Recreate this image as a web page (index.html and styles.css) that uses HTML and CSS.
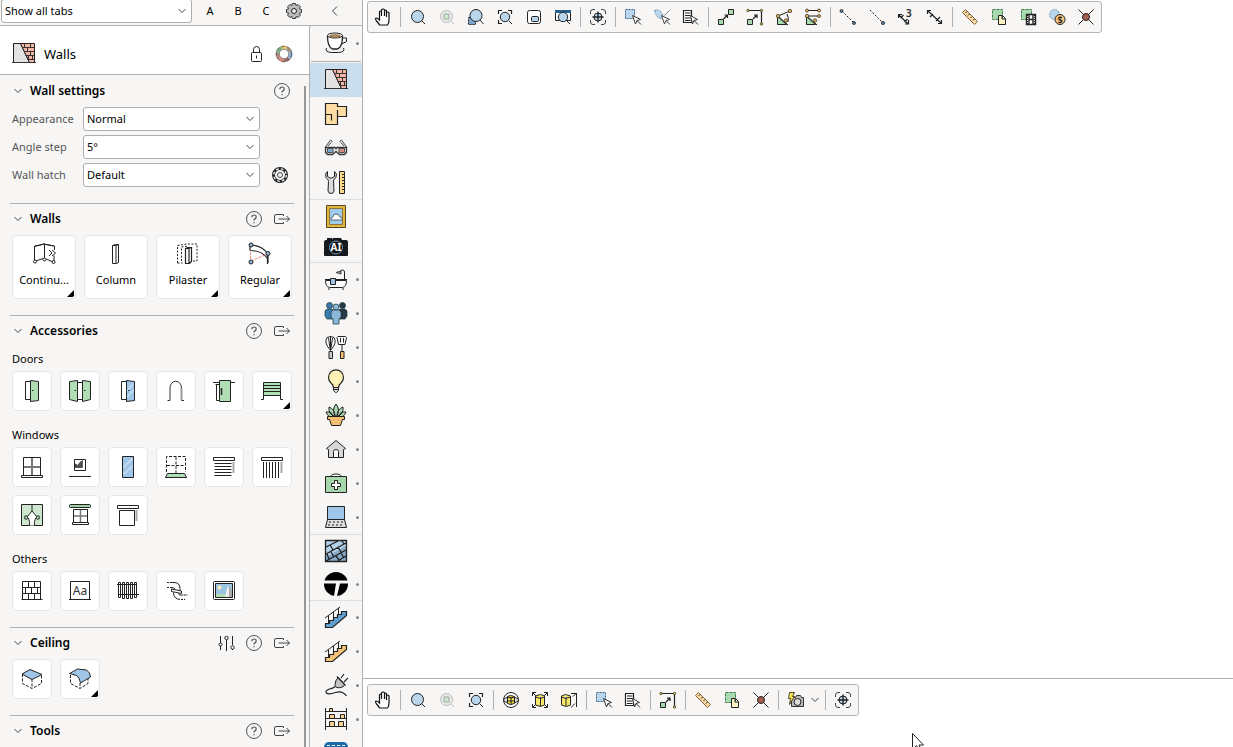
FILE: index.html
```html
<!DOCTYPE html>
<html lang="en">
<head>
<meta charset="utf-8">
<title>Floor planner</title>
<link rel="stylesheet" href="styles.css">
</head>
<body>
<svg class="sprite" aria-hidden="true">
  <symbol id="chev" viewBox="0 0 10 10"><path d="M1.500 3l3.500 3.500L8.500 3" stroke="#444"/></symbol>
  <symbol id="back" viewBox="0 0 10 10"><path d="M7 .5L2.500 5 7 9.500" stroke="#444"/></symbol>
  <symbol id="corner" viewBox="0 0 8 8"><path d="M8 0v6q0 2-2 2H0z" fill="#000" stroke="none"/></symbol>
  <symbol id="gear" viewBox="0 0 24 24"><path d="M10.500 4.500h3l.6 2 1.900-1 2.300 2.300-1 1.900 2.200.8v3l-2.200.8 1 1.900-2.300 2.300-1.900-1-.6 2h-3l-.7-2-1.900 1-2.300-2.300 1-1.900-2.100-.8v-3l2.100-.8-1-1.900 2.300-2.300 1.900 1z" fill="#bbb" stroke="#333"/><circle cx="12" cy="12" r="2.500" fill="#eee"/></symbol>
  <symbol id="gear2" viewBox="0 0 24 24"><circle cx="12" cy="12" r="6.500" stroke-width="3"/><circle cx="12" cy="12" r="6.300" stroke="#fff" stroke-width="1.200" stroke-dasharray="2.800 2.150"/><circle cx="12" cy="12" r="2.500" stroke="#444"/></symbol>
  <symbol id="lock" viewBox="0 0 24 24"><rect x="7.500" y="10.500" width="10" height="9" rx="1"/><path d="M9.500 10V7.500a3 3 0 0 1 6 0V10M12.500 13.500v3"/></symbol>
  <symbol id="wheel" viewBox="0 0 24 24"><g stroke-width="3.500"><path d="M9.500 5.800a6.500 6.500 0 0 1 5 0" stroke="#e9c46a"/><path d="M15 6a6.500 6.500 0 0 1 3.300 4" stroke="#a9997a"/><path d="M18.500 10a6.500 6.500 0 0 1-1.300 6" stroke="#87add0"/><path d="M17 16.200a6.500 6.500 0 0 1-5 2.300" stroke="#9a6c65"/><path d="M12 18.500a6.500 6.500 0 0 1-5-2.500" stroke="#e18b75"/><path d="M7 16a6.500 6.500 0 0 1-1.400-5.500" stroke="#b78684"/><path d="M5.600 10.500a6.500 6.500 0 0 1 4-4.600" stroke="#79b387"/></g><circle cx="12" cy="12" r="7.700" stroke="#555" stroke-width=".8" stroke-dasharray="4 1.500"/><circle cx="12" cy="12" r="4.700" stroke="#777" stroke-width=".8"/></symbol>
  <symbol id="help" viewBox="0 0 24 24"><circle cx="12" cy="12" r="7.500" stroke="#555"/><path d="M9.800 10.200q0-2.200 2.200-2.200t2.200 2q0 1.200-1.300 1.900-.9.500-.9 1.600" stroke="#555" stroke-width="1.200"/><path d="M11.400 15h1.200v1.300h-1.200z" fill="#555" stroke="none"/></symbol>
  <symbol id="out" viewBox="0 0 24 24"><path d="M13.500 9V7.500H6q-1.500 0-1.500 1.500v6q0 1.500 1.500 1.500h7.500V15M8.500 12h11M16.500 9l3 3-3 3" stroke="#444"/></symbol>
  <symbol id="sliders" viewBox="0 0 24 24"><path d="M6.500 5v7M6.500 15v4M12.500 9v11M18.500 5v9M18.500 18v1"/><circle cx="6.500" cy="13.500" r="1.500"/><circle cx="12.500" cy="7" r="1.700"/><circle cx="18.500" cy="16.500" r="1.700"/></symbol>

  <symbol id="wall" viewBox="0 0 24 24"><path d="M1.500 1.500h7l9 19h-16z" fill="#e2e2e2"/><path d="M8.500 1.500h14v19h-5z" fill="#f5b5a4"/><path d="M10 5.500h12.500M12 9.500h10.500M13.500 13.500h9M15.500 17.500h7M12.500 1.500v4M18.500 1.500v4M15.500 5.500v4M18.500 9.500v4M16.500 13.500v4M20.500 13.500v4M0 20.500h24" stroke="#333"/></symbol>
  <symbol id="cont" viewBox="0 0 24 24"><path d="M2.500 18V4q5-.5 9.500-2l10.500 2v4M2.500 4.500l9-2.500 10 2M12.500 2v15M22 13.500V19M4 19l7-2.500M14 17l6 2.500"/><path d="M17 8l3 3-3 3M20 8l3.500 3-3.500 3"/><g fill="#fff"><circle cx="3" cy="19.500" r="1.500"/><circle cx="12.500" cy="17.500" r="1.500"/><circle cx="21.500" cy="20" r="1.500"/></g></symbol>
  <symbol id="col" viewBox="0 0 24 24"><path d="M8.500 3.500l3-1h3v18l-2 1h-4zM8.500 3.500H12l2.500-1M12 3.500v18"/></symbol>
  <symbol id="pil" viewBox="0 0 24 24"><path d="M1.500 21V3.500l9-1.500h10.500v17h-5M1.500 21h5M5.500 19V5l7-1" stroke-dasharray="2 1.500"/><path d="M9.500 6.500l2-1h4v14l-2 2h-4zM9.500 6.500H13l2-1M13 6.500v15" fill="#fff" stroke-width="1.200"/></symbol>
  <symbol id="reg" viewBox="0 0 24 24"><path d="M2 3q12 0 18 9v9M2 8.500q13 0 18 9M2 3v5.500M19.500 12v10" stroke-width="1.200"/><path d="M2.500 10v9M3 19l16-7" stroke="#e08a72" stroke-dasharray="3 1"/><g fill="#8fb8dc"><circle cx="3" cy="3" r="2"/><circle cx="20" cy="11.500" r="2"/><circle cx="3" cy="20" r="2"/></g></symbol>

  <symbol id="d1" viewBox="0 0 24 24"><path d="M5.500 2.500h5v18h-5z"/><path d="M10.500 1.500l8 1v19l-8 1z" fill="#b1ddb5"/><path d="M12 11.500h1.500"/></symbol>
  <symbol id="d2" viewBox="0 0 24 24"><path d="M9.500 3.500h5v17h-5z"/><path d="M1.500 2.500l8-1v21l-8-2zM22.500 2.500l-8-1v21l8-2z" fill="#b1ddb5"/><path d="M6.500 11.500h1.500M16 11.500h1.500"/></symbol>
  <symbol id="d3" viewBox="0 0 24 24"><path d="M5.500 2.500h5v18h-5z"/><path d="M10.500 1.500l8 1v19l-8 1z" fill="#9fc5e8"/><path d="M11 18l7-7M11 12l6-7" stroke="#c6dcf0" stroke-width="1.500"/><path d="M12 11.500h1.500"/></symbol>
  <symbol id="d4" viewBox="0 0 24 24"><path d="M3.500 21.500H6V9a5.500 6.500 0 0 1 11.500 0v12.500H20" stroke="#333"/><path d="M6 9v12M17.500 9v12" stroke="#999" stroke-width="2"/></symbol>
  <symbol id="d5" viewBox="0 0 24 24"><path d="M1 3.500h22M4.500 5.500v16h3M3.500 5.500h4"/><path d="M7.500 1.500h11v21h-11z" fill="#b1ddb5"/><path d="M9.500 9v7" stroke-width="1.500"/></symbol>
  <symbol id="d6" viewBox="0 0 24 24"><path d="M3.500 3.500h17v13h-17z" fill="#b1ddb5"/><path d="M3.500 6.500h17M3.500 9.500h17M3.500 12.500h17M3.500 15v5.500H1M20.500 15v5.500H23"/></symbol>
  <symbol id="w1" viewBox="0 0 24 24"><path d="M3.500 2.500h17v18h-17zM1.500 20.500h21v2h-21z"/><path d="M12 3v17M4 12h16" stroke="#777" stroke-width="2"/></symbol>
  <symbol id="w2" viewBox="0 0 24 24"><path d="M6.500 4.500h11v11h-11zM1 21.500h22"/><path d="M6.500 12.500h8v-8" stroke="#666"/><path d="M7.500 12V9l2 1.500L13.500 6v6z" fill="#555" stroke="#444"/></symbol>
  <symbol id="w3" viewBox="0 0 24 24"><path d="M7 12l9-9" /><path d="M6.500 1.500h11v21h-11z" fill="#9fc5e8"/><path d="M7.500 12.500l9-9M7.500 19l9-8" stroke="#c3daef" stroke-width="2"/></symbol>
  <symbol id="w4" viewBox="0 0 24 24"><path d="M2.500 17V1.500h19V17M12 2v16M3 10.500h18" stroke-dasharray="3 1.500"/><path d="M3.500 18.500h17l2 4h-21z" fill="#b1ddb5"/></symbol>
  <symbol id="w5" viewBox="0 0 24 24"><path d="M1.500 2.500h21v3h-21zM2.500 8.500h17M2.500 11.500h17M2.500 14.500h17M2.500 17.500h17M2.500 20.500h17"/><path d="M21.500 7v11" stroke="#aaa" stroke-width="2"/></symbol>
  <symbol id="w6" viewBox="0 0 24 24"><path d="M1.500 2.500h21v3h-21zM3.500 7v16M6.500 7v16M9.500 7v16M12.500 7v16M15.500 7v16M18.500 7v16"/><path d="M21.500 7v11" stroke="#aaa" stroke-width="2"/></symbol>
  <symbol id="w7" viewBox="0 0 24 24"><path d="M1.500 1.500h21v21h-21z" fill="#cde8cf"/><path d="M12 8l-4.500 6q2.500 1 2 8.500h5q-.5-7.500 2-8.500z" fill="#fff" stroke="none"/><path d="M12 2v6l-5 6q3 2 2.500 8.500M12 8l5 6q-3 2-2.500 8.500"/><g fill="#b1ddb5"><circle cx="6" cy="14.500" r="1.700"/><circle cx="18" cy="14.500" r="1.700"/></g></symbol>
  <symbol id="w8" viewBox="0 0 24 24"><rect x="1.500" y="1.500" width="21" height="3" rx="1" fill="#9fcfa5"/><path d="M5.500 6.500h14v13h-14zM4.500 19.500h16v2h-16z"/><path d="M12.500 7v12M6 13h13" stroke="#777" stroke-width="1.500"/></symbol>
  <symbol id="w9" viewBox="0 0 24 24"><path d="M1.500 2.500h21v3h-21zM3.500 7.500h15v15h-15z"/><path d="M20.500 7v11" stroke="#aaa" stroke-width="2"/></symbol>
  <symbol id="o1" viewBox="0 0 24 24"><path d="M2.500 2.500h18v18h-18zM1.500 20.500h21M2.500 8.500h18M2.500 14.500h18M8.500 2.500v6M14.500 2.500v6M5.500 8.500v6M11.500 8.500v6M17.500 8.500v6M8.500 14.500v6M14.500 14.500v6"/></symbol>
  <symbol id="o3" viewBox="0 0 24 24"><path d="M1 5.500h20M2 15.500h21M2.500 3.500h2v15h-2zM6.500 3.500h2v16h-2zM10.500 3.500h2v16h-2zM14.500 3.500h2v16h-2zM18.500 3.500h2v15h-2z"/></symbol>
  <symbol id="o4" viewBox="0 0 24 24"><path d="M2 3.500h8q6 0 6 6v1.500M2 8.500h5q3.500 0 4 1.500M7.500 10l10 2v2.500l-10-2zM9.500 13.500q0 7 7.500 7h4M14.500 14.500q0 2 5 1.500h4"/><path d="M2 3.500h6M16 20.500h7M2 8.500h4M19 16h4" stroke="#fff" stroke-dasharray="1 2"/></symbol>
  <symbol id="o5" viewBox="0 0 24 24"><rect x="1.500" y="2.500" width="21" height="18" rx="1"/><path d="M3.500 4.500h17v14h-17z" fill="#9bc4e2"/><path d="M4 15h13l3 3H4z" fill="#b1ddb5" stroke="none"/><path d="M16 6l3 12h-6z" fill="#eee" stroke="none"/><path d="M17 7l3 5v6h-3z" fill="#aaa" stroke="none"/><circle cx="7.500" cy="8.500" r="2" fill="#fdf0b0" stroke="none"/></symbol>
  <symbol id="c1" viewBox="0 0 24 24"><path d="M2.500 7v9.500l9.500 5 9.500-5V7M12 12v9" stroke-dasharray="3 1.500"/><path d="M2 7l8-4.500 12 5-10 5z" fill="#9fc5e8"/></symbol>
  <symbol id="c2" viewBox="0 0 24 24"><path d="M2.500 8v8.500l9.500 5 8-5V11M12 16v5" stroke-dasharray="3 1.500"/><path d="M1.500 6.500l8-4.500 9 1 3 3 1 4-10 6q-1-6-4-7.500z" fill="#9fc5e8"/></symbol>

  <symbol id="cup" viewBox="0 0 24 24"><path d="M2.500 17q-2 4 5 4.500h7q7-.5 5-4.500" fill="#eee"/><path d="M3.500 5q0 11 5 13h5q5-2 5-13z" fill="#fff" stroke-width="1.300"/><ellipse cx="11" cy="4.500" rx="7.500" ry="2.500" fill="#fff"/><ellipse cx="11" cy="5" rx="5.500" ry="1.200" fill="#c39768" stroke="#8a6a45"/><path d="M18.500 7h4v3.500l-5 2.500"/></symbol>
  <symbol id="plan" viewBox="0 0 24 24"><path d="M1.500 1.500h12v3h9v10h-9v8h-12zM13.500 8v7M1.500 12.500h6v6" fill="#fddca4" stroke="#222" stroke-width="1.200"/></symbol>
  <symbol id="glasses" viewBox="0 0 24 24"><path d="M1.500 11l5-7 2 1.500M22.500 11l-5-7-2 1.500M4 10l3.500-4M20 10l-3.500-4" stroke="#444"/><path d="M1.500 11.500h9.500l1 1 1-1h9.500v5l-2 2h-5l-3.500-3-3.500 3h-5l-2-2z" fill="#ddd" stroke="#333" stroke-width="1.300"/><path d="M3.500 12.500h5.500v4H3.500z" fill="#79abd5" stroke="#555"/><path d="M15 12.500h5.500v4H15z" fill="#d88d84" stroke="#555"/></symbol>
  <symbol id="tools" viewBox="0 0 24 24"><path d="M3.500 1.500q-3 2-1.500 6 2.500 2 2.500 4l-.5 9.500q.5 2.500 3 2.500t3-2.500L9.500 11q0-2 2.500-3.500 1.500-4-1.500-6v5L8 8H6L3.500 6.500z" fill="#ddd"/><path d="M15.500 1.500h5v22h-5z" fill="#fbd98c"/><path d="M18 4.500h2.500M18 7.500h2.500M18 10.500h2.500M18 13.500h2.500M18 16.500h2.500M18 19.500h2.500"/></symbol>
  <symbol id="frame" viewBox="0 0 24 24"><path d="M2.500 1.500h19v22h-19z" fill="#e2b53d" stroke="#544624"/><path d="M5.500 4.500h13v16h-13z" fill="#9fcbed" stroke="#91743b"/><path d="M7 16q-1-3 2-3 0-3 3-3t4 3q3 0 2 3z" fill="#fff" stroke="#567"/></symbol>
  <symbol id="bath" viewBox="0 0 24 24"><path d="M1.500 13.500h21q0 6-4 7h-13q-4-1-4-7z" fill="#fff"/><path d="M1 12.500h22M20.500 13V5q0-2-2-2t-3 2.500M5 21v2M19 21v2"/><path d="M12 5.500l5-1.500v3z" fill="#999" stroke="#444"/><path d="M6.500 11.500h5v6h-5z" fill="#9fc5e8"/></symbol>
  <symbol id="people" viewBox="0 0 24 24"><g stroke="#244" stroke-width=".8"><g fill="#3a7ab0"><circle cx="5.500" cy="4.500" r="3"/><path d="M1 10l2-2h5l2 2v8H3l-2-3z"/></g><g fill="#263746"><circle cx="18.500" cy="4.500" r="3"/><path d="M23 10l-2-2h-5l-2 2v8h7l2-3z"/></g><g fill="#8eb6da"><circle cx="12" cy="6" r="3"/><path d="M7 11l2-2h6l2 2v5l-2 2v5H9v-5l-2-2z"/></g></g></symbol>
  <symbol id="kitchen" viewBox="0 0 24 24"><path d="M6.500 15.500q-7-8-3.500-13 3.500-2 7 0 3.500 5-3.500 13zM6.500 1v14M4.500 3l1.500 10M8.500 3L7 13" fill="#fff"/><path d="M5 16.500h3.500v7H5z" fill="#ccc"/><path d="M14 1.500h7.500l1 1-1.500 7h-6.500l-1.500-7zM16.500 3v4.500M19.500 3v4.500M18 10v6" fill="#fff"/><path d="M16.500 16.500h3.500v7h-3.500z" fill="#f6be72"/></symbol>
  <symbol id="bulb" viewBox="0 0 24 24"><path d="M9.500 18.500q0-2.500-2.500-4.500a7.500 7.500 0 1 1 10 0q-2.500 2-2.500 4.500z" fill="#fff0b5" stroke-width="1.200"/><path d="M9.500 18.500h5v3l-2 2h-1l-2-2zM9.500 20.500h5" fill="#ddd"/></symbol>
  <symbol id="plant" viewBox="0 0 24 24"><path d="M12 14q-5-7 0-13 5 6 0 13zM11 14q-7-3-6-10 6 2 6 10zM13 14q7-3 6-10-6 2-6 10zM10 14q-6 1-8-5 6-1 8 5zM14 14q6 1 8-5-6-1-8 5z" fill="#a9d5ae"/><path d="M3.500 13.500h17v3h-2l-2 6h-9l-2-6h-2z" fill="#f5be71"/></symbol>
  <symbol id="home" viewBox="0 0 24 24"><path d="M2.500 11.500L12 3.500l9.500 8-2 1v8h-15v-8z" fill="#d8d8d8"/><path d="M9.500 20.500v-6q0-2 2.500-2t2.500 2v6z" fill="#fff"/></symbol>
  <symbol id="aid" viewBox="0 0 24 24"><path d="M7 5.500Q7 3 12 3t5 2.500"/><path d="M1.500 5.500h21v16h-21z" fill="#a6d7ad"/><path d="M10.500 9.500h3v3h3v3h-3v3h-3v-3h-3v-3h3z" fill="#fff"/></symbol>
  <symbol id="laptop" viewBox="0 0 24 24"><path d="M3.500 1.500h17v13h-17z" fill="#9fc5e8"/><path d="M3.500 14.500h17l2 8h-21z" fill="#ddd"/><path d="M5 17h14M4 20h16" stroke-dasharray="2 2"/></symbol>
  <symbol id="tiles" viewBox="0 0 24 24"><path d="M1.500 1.500h21v21h-21z" fill="#b4d0e8"/><path d="M2 22v-4l20-11v15z" fill="#86a9c7" stroke="none"/><path d="M1.500 1.500h21v21h-21zM2 8l12-6M2 15l20-11M2 22l20-11M12 23l10-6M6 6l3 5M14 8l3 5M7 13l3 5M17 14l3 5M3 15l2 5M12 17l3 4M18 2l2 3" stroke-width="1.300"/></symbol>
  <symbol id="tee" viewBox="0 0 24 24"><circle cx="12" cy="12" r="12" fill="#000" stroke="none"/><path d="M0 8.500h24v3h-8L13 24h-3l2-12.500H0z" fill="#f7f6f5" stroke="none"/></symbol>
  <symbol id="stairsB" viewBox="0 0 24 24"><path d="M1.500 18.500h4v-3h4v-3h4v-3h4v-3h5v4L8.500 22.500h-7z" fill="#5f9fd0" stroke-width="1.200"/><path d="M1 13L16 2M4.500 11v7M9.500 7v6M14.500 3v7"/></symbol>
  <symbol id="stairsO" viewBox="0 0 24 24"><path d="M1.500 18.500h4v-3h4v-3h4v-3h4v-3h5v4L8.500 22.500h-7z" fill="#f6c478" stroke-width="1.200"/><path d="M1 13L16 2M4.500 11v7M9.500 7v6M14.500 3v7"/></symbol>
  <symbol id="plug" viewBox="0 0 24 24"><path d="M14 4.500l6.500 7-1 2q-4 2-7 1l-1.500-2q0-5 3-8z" fill="#c4c4c4"/><path d="M13 3.500l8.500 9M17 5l3-4M20 9l4-4M11.500 13.500q-3 2-6 2.500-5 2-3 4t9-.5 11 3.500" stroke-width="1.200"/></symbol>
  <symbol id="shelf" viewBox="0 0 24 24"><path d="M1.500 1v22M22.500 1v22M1.500 4.500h21M1.500 11.500h21M1.500 19.500h21"/><path d="M5.500 1.500h3v3h-3zM5.500 7.500h5v4h-5zM16.500 7.500h4v4h-4zM5.500 14.500h5v5h-5zM14.500 14.500h5v5h-5z" fill="#f7cf91"/></symbol>
  <symbol id="blue" viewBox="0 0 24 24"><rect y="1" width="24" height="22" rx="5" fill="#1c6cab" stroke="none"/><path d="M3 4.500h18" stroke="#fff" stroke-dasharray="3 2"/></symbol>

  <symbol id="hand" viewBox="0 0 24 24"><path d="M8.500 20q-1-2-3-4-2-3 0-3 1 0 3 2V7q0-1 1-1t1 1v4V5q.5-1 1.500-1t1.500 1v6V6q0-1 1-1t1 1v6-4q0-1 1-1t1.500 1v7q0 3-1.500 5z" fill="#fff" stroke="#111" stroke-width="1.200"/></symbol>
  <symbol id="mag" viewBox="0 0 24 24"><circle cx="11.500" cy="11.500" r="6" fill="#b9d6ec"/><path d="M15.500 15.500L19 19"/></symbol>
  <symbol id="magG" viewBox="0 0 24 24"><g stroke="#bbb"><circle cx="11.500" cy="11.500" r="6" fill="#e8eaea"/><path d="M15.500 15.500L19 19"/></g><path d="M9 9h5v5H9z" fill="#cfe6cf" stroke="#9cab9e"/></symbol>
  <symbol id="magS" viewBox="0 0 24 24"><path d="M4.500 12.500h7v7h-7z" fill="#7ba5cc" stroke-dasharray="2 1"/><circle cx="12" cy="10.500" r="6" fill="#b9d6ec"/><path d="M16 15l3.500 4"/></symbol>
  <symbol id="magF" viewBox="0 0 24 24"><path d="M5.500 9V5.500H9M15 5.500h3.500V9M5.500 15v3.500H9" stroke-width="1.200"/><circle cx="12" cy="12" r="4.700" fill="#b9d6ec"/><path d="M15.500 15.500L19 19"/></symbol>
  <symbol id="win" viewBox="0 0 24 24"><rect x="5.500" y="5.500" width="13" height="13" rx="2" fill="#fff"/><rect x="9.500" y="11.500" width="7" height="5" rx="1" fill="#b9d6ec"/></symbol>
  <symbol id="magW" viewBox="0 0 24 24"><path d="M4.500 6.500h15v9h-15z" fill="#fff"/><path d="M4 6.500h16" stroke="#27618f" stroke-width="3"/><circle cx="12" cy="12" r="4.700" fill="#b9d6ec"/><path d="M15.500 15.500L19 19"/></symbol>
  <symbol id="target" viewBox="0 0 24 24"><path d="M4.500 9V7q0-2.500 2.500-2.500h2M15 4.500h2q2.500 0 2.500 2.500v2M4.500 15v2q0 2.500 2.500 2.500h2M19.500 15v2q0 2.500-2.500 2.500h-2" stroke="#444"/><circle cx="12" cy="12" r="4" fill="#b9d6ec"/><path d="M12 6.500v11M6.500 12h11" stroke-width="1.400"/></symbol>
  <symbol id="sel" viewBox="0 0 24 24"><path d="M4.500 4.500h9v9h-9z" fill="#b9d6ec" stroke="#32628c" stroke-dasharray="2 1"/><path d="M11.500 10.500l8 4-3.500 1-1.500 3.500zM16 15.500l4 4" fill="#fff" stroke="#333"/></symbol>
  <symbol id="sel2" viewBox="0 0 24 24"><path d="M4.500 5.500q4-2 7 2t0 6q-5 0-7-8z" fill="#b9d6ec" stroke="#6491b5" stroke-dasharray="2 1"/><path d="M13 12l7-7" stroke="#555" stroke-dasharray="2 1"/><path d="M11.500 10.500l8 4-3.500 1-1.500 3.500zM16 15.500l4 4" fill="#fff" stroke="#444"/></symbol>
  <symbol id="list" viewBox="0 0 24 24"><path d="M4.500 5.500h8v12h-8zM6 8h5.500M6 10.500h5.500M6 13h5.500M6 15.500h5.500" fill="#fff" stroke-width="1.200"/><path d="M11.500 10.500l7 4-3.500 1-1.500 3.500zM15 15.500l4 4" fill="#fff" stroke="#333"/></symbol>
  <symbol id="mv1" viewBox="0 0 24 24"><path d="M14.500 4.500h5v5h-5zM4.500 14.500h5v5h-5z" fill="#a9d9ae"/><path d="M9.500 14l4-4M10.500 10h3v3" stroke-width="1.200"/></symbol>
  <symbol id="mv2" viewBox="0 0 24 24"><path d="M5 5.500h13.500V19" stroke-width="1.200"/><path d="M4.500 14.500h5v5h-5z" fill="#a9d9ae"/><path d="M10 14l4-4M11 10h3v3" stroke-width="1.200"/><g fill="#e3ce59" stroke-width=".7"><circle cx="5" cy="5.500" r="1.200"/><circle cx="18.500" cy="5.500" r="1.200"/><circle cx="18.500" cy="19" r="1.200"/></g></symbol>
  <symbol id="ang1" viewBox="0 0 24 24"><path d="M5.500 19.500v-8l9 8z" fill="#a9d9ae"/><path d="M6 11l12-5M6 11l10 9M15 9q2 4 1 8"/><g fill="#e4b952" stroke-width=".7"><circle cx="6" cy="11" r="1.700"/><circle cx="18" cy="6" r="1.700"/><circle cx="14" cy="15.500" r="1.700"/></g></symbol>
  <symbol id="ang2" viewBox="0 0 24 24"><path d="M5.500 19.500v-8l9 8z" fill="#a9d9ae"/><path d="M6 5.500h12M6 11h12M6 11l10 9"/><g fill="#e4b952" stroke-width=".7"><circle cx="6" cy="5.500" r="1.500"/><circle cx="18" cy="5.500" r="1.500"/><circle cx="6" cy="11" r="1.700"/><circle cx="18" cy="11" r="1.500"/><circle cx="14" cy="15.500" r="1.700"/></g></symbol>
  <symbol id="ln1" viewBox="0 0 24 24"><path d="M6 6l12 12" stroke-dasharray="2 1.500"/><g fill="#5b86ad" stroke-width=".8"><circle cx="5.500" cy="6" r="1.500"/><circle cx="18" cy="18" r="1.500"/></g></symbol>
  <symbol id="ln2" viewBox="0 0 24 24"><path d="M5 5l13 13" stroke-dasharray="2 1.500"/><circle cx="18" cy="18" r="1.600" fill="#5b86ad" stroke-width=".8"/></symbol>
  <symbol id="dim" viewBox="0 0 24 24"><path d="M5 6l13 12M4.500 9V5.500H8M18.500 15v3.500H15M10 9l-3 3M17 12l-4 4" stroke-width="1.200"/></symbol>
  <symbol id="ruler" viewBox="0 0 24 24"><path d="M7.500 4.500l12 12-3 3-12-12z" fill="#fbd8a0" stroke="#85633a"/><path d="M9 6.500L7.500 8M11.500 9L10 10.500M14 11.500L12.500 13M16.500 14L15 15.500"/></symbol>
  <symbol id="copy" viewBox="0 0 24 24"><path d="M5.500 4.500h10v10h-10z" fill="#a9d9ae" stroke="#3d7a4a" stroke-dasharray="3 1"/><path d="M11.500 10.500h4l3 3v6h-7zM15 10.500v3.500h3.500" fill="#fff3c6"/></symbol>
  <symbol id="film" viewBox="0 0 24 24"><path d="M5.500 4.500h10v10h-10z" fill="#a9d9ae" stroke="#3d7a4a" stroke-dasharray="3 1"/><path d="M10.500 9.500h9v10h-9zM13 9.500v10M17 9.500v10M13 14.500h4" fill="#fff" stroke-width="1.400"/><path d="M11.500 10v9M18.500 10v9" stroke-dasharray="1 1"/></symbol>
  <symbol id="cross" viewBox="0 0 24 24"><path d="M4.500 4.500l15 15M19.500 4.500l-15 15"/><circle cx="12" cy="12" r="3.500" fill="#a7604f"/></symbol>
  <symbol id="orbit" viewBox="0 0 24 24"><circle cx="12" cy="12" r="7.500" fill="#fff"/><ellipse cx="12" cy="12" rx="7.500" ry="3" fill="#ddd"/><path d="M8.500 8.500l3-1 4 1v7l-4 1-3-1zM8.500 9l3.500 1 3.500-1M12 9.500V17M8 13h8" fill="#f4df4d"/></symbol>
  <symbol id="box" viewBox="0 0 24 24"><path d="M4.500 8V4.500H8M16 4.500h3.500V8M4.500 16v3.500H8M16 19.500h3.500V16M5 5l3 3M19 5l-3 3M5 19l3-3M19 19l-3-3"/><path d="M7.500 8l5-1.500 4 1.500v9l-4 1.500-5-1.500zM7.500 9l5 1.500L16.500 9M12.500 9v9" fill="#f9e96a"/></symbol>
  <symbol id="box2" viewBox="0 0 24 24"><path d="M4.500 8l4-1.500 5 1.500v9l-4 1.500-5-1.500zM4.500 9l4 1.500L13.500 9M9 9v9" fill="#f9e96a"/><path d="M19.500 5v14M14 5.500h5l-3 3M14 19.500l4-4"/></symbol>
  <symbol id="snap" viewBox="0 0 24 24"><path d="M7.500 9.500h4l1-2h4l1 2h2v9h-12z" fill="#bbb" stroke="#333"/><circle cx="13.500" cy="14" r="3.500" fill="#ddd"/><path d="M5.500 4.500h5l-2 4h2l-5 8 1-6h-2z" fill="#f4df4d" stroke-width=".8"/></symbol>
</svg>

<div class="app">
  <div class="side">
    <header class="topbar">
      <label class="drop tabs-drop"><select aria-label="Tabs"><option>Show all tabs</option></select><svg><use href="#chev"/></svg></label>
      <button class="letter">A</button><button class="letter">B</button><button class="letter">C</button>
      <button class="ico" aria-label="Options"><svg><use href="#gear"/></svg></button>
      <button class="collapse" aria-label="Collapse"><svg><use href="#back"/></svg></button>
    </header>
    <div class="side-body">
      <aside class="panel">
        <div class="title">
          <svg><use href="#wall"/></svg><h1>Walls</h1>
          <button class="ico" aria-label="Lock"><svg><use href="#lock"/></svg></button>
          <button class="ico" aria-label="Colours"><svg><use href="#wheel"/></svg></button>
        </div>
        <div class="scroll">
          <div class="thumb"></div>
          <section>
            <div class="head"><svg class="c"><use href="#chev"/></svg><h2>Wall settings</h2><button class="ico" aria-label="Help"><svg><use href="#help"/></svg></button></div>
            <div class="form">
              <label for="f1">Appearance</label><span class="drop"><select id="f1"><option>Normal</option></select><svg><use href="#chev"/></svg></span><span></span>
              <label for="f2">Angle step</label><span class="drop"><select id="f2"><option>5°</option></select><svg><use href="#chev"/></svg></span><span></span>
              <label for="f3">Wall hatch</label><span class="drop"><select id="f3"><option>Default</option></select><svg><use href="#chev"/></svg></span><button class="ico" aria-label="Hatch settings"><svg><use href="#gear2"/></svg></button>
            </div>
          </section>
          <section>
            <div class="head"><svg class="c"><use href="#chev"/></svg><h2>Walls</h2><button class="ico" aria-label="Help"><svg><use href="#help"/></svg></button><button class="ico" aria-label="Detach"><svg><use href="#out"/></svg></button></div>
            <div class="grid">
              <button class="card"><svg><use href="#cont"/></svg>Continu...<svg class="more"><use href="#corner"/></svg></button>
              <button class="card"><svg><use href="#col"/></svg>Column</button>
              <button class="card"><svg><use href="#pil"/></svg>Pilaster<svg class="more"><use href="#corner"/></svg></button>
              <button class="card"><svg><use href="#reg"/></svg>Regular<svg class="more"><use href="#corner"/></svg></button>
            </div>
          </section>
          <section>
            <div class="head"><svg class="c"><use href="#chev"/></svg><h2>Accessories</h2><button class="ico" aria-label="Help"><svg><use href="#help"/></svg></button><button class="ico" aria-label="Detach"><svg><use href="#out"/></svg></button></div>
            <h3>Doors</h3>
            <div class="grid">
              <button class="tile"><svg><use href="#d1"/></svg></button>
              <button class="tile"><svg><use href="#d2"/></svg></button>
              <button class="tile"><svg><use href="#d3"/></svg></button>
              <button class="tile"><svg><use href="#d4"/></svg></button>
              <button class="tile"><svg><use href="#d5"/></svg></button>
              <button class="tile"><svg><use href="#d6"/></svg><svg class="more"><use href="#corner"/></svg></button>
            </div>
            <h3>Windows</h3>
            <div class="grid">
              <button class="tile"><svg><use href="#w1"/></svg></button>
              <button class="tile"><svg><use href="#w2"/></svg></button>
              <button class="tile"><svg><use href="#w3"/></svg></button>
              <button class="tile"><svg><use href="#w4"/></svg></button>
              <button class="tile"><svg><use href="#w5"/></svg></button>
              <button class="tile"><svg><use href="#w6"/></svg></button>
              <button class="tile"><svg><use href="#w7"/></svg></button>
              <button class="tile"><svg><use href="#w8"/></svg></button>
              <button class="tile"><svg><use href="#w9"/></svg></button>
            </div>
            <h3>Others</h3>
            <div class="grid">
              <button class="tile"><svg><use href="#o1"/></svg></button>
              <button class="tile"><svg viewBox="0 0 24 24"><path d="M2.500 2.500h19v18h-19zM1 20.500h22"/><text x="12" y="16" text-anchor="middle" font-size="12" fill="#333" stroke="none">Aa</text></svg></button>
              <button class="tile"><svg><use href="#o3"/></svg></button>
              <button class="tile"><svg><use href="#o4"/></svg></button>
              <button class="tile"><svg><use href="#o5"/></svg></button>
            </div>
          </section>
          <section>
            <div class="head"><svg class="c"><use href="#chev"/></svg><h2>Ceiling</h2><button class="ico" aria-label="Adjust"><svg><use href="#sliders"/></svg></button><button class="ico" aria-label="Help"><svg><use href="#help"/></svg></button><button class="ico" aria-label="Detach"><svg><use href="#out"/></svg></button></div>
            <div class="grid">
              <button class="tile"><svg><use href="#c1"/></svg></button>
              <button class="tile"><svg><use href="#c2"/></svg><svg class="more"><use href="#corner"/></svg></button>
            </div>
          </section>
          <section>
            <div class="head"><svg class="c"><use href="#chev"/></svg><h2>Tools</h2><button class="ico" aria-label="Help"><svg><use href="#help"/></svg></button><button class="ico" aria-label="Detach"><svg><use href="#out"/></svg></button></div>
          </section>
        </div>
      </aside>
      <nav class="strip">
        <div class="group first"><button class="dot"><svg><use href="#cup"/></svg></button></div>
        <div class="group"><button class="on"><svg><use href="#wall"/></svg></button><button><svg><use href="#plan"/></svg></button><button><svg><use href="#glasses"/></svg></button><button><svg><use href="#tools"/></svg></button></div>
        <div class="group line short"><button><svg><use href="#frame"/></svg></button><button><svg viewBox="0 0 24 24"><path d="M3 5V3h5v1.500L9 3h8l1 2h4q2 0 2 2v13q0 1-1 1H1q-1 0-1-1V7q0-2 2-2z" fill="#16191d" stroke="none"/><circle cx="12" cy="12.500" r="6.500" fill="#111" stroke="#6c9db5"/><text x="12" y="16" text-anchor="middle" font-size="10" font-weight="700" fill="#fff" stroke="none">AI</text></svg></button></div>
        <div class="group line"><button class="dot"><svg><use href="#bath"/></svg></button><button class="dot"><svg><use href="#people"/></svg></button><button class="dot"><svg><use href="#kitchen"/></svg></button><button class="dot"><svg><use href="#bulb"/></svg></button><button class="dot"><svg><use href="#plant"/></svg></button><button class="dot"><svg><use href="#home"/></svg></button><button class="dot"><svg><use href="#aid"/></svg></button><button class="dot"><svg><use href="#laptop"/></svg></button></div>
        <div class="group line mid"><button><svg><use href="#tiles"/></svg></button><button class="dot"><svg><use href="#tee"/></svg></button></div>
        <div class="group line"><button class="dot"><svg><use href="#stairsB"/></svg></button><button class="dot"><svg><use href="#stairsO"/></svg></button><button class="dot"><svg><use href="#plug"/></svg></button><button class="dot"><svg><use href="#shelf"/></svg></button><button><svg><use href="#blue"/></svg></button></div>
      </nav>
    </div>
  </div>
  <main class="work">
    <div class="view plan">
      <div class="bar">
        <button><svg><use href="#hand"/></svg></button><i></i>
        <button><svg><use href="#mag"/></svg></button><button><svg><use href="#magG"/></svg></button><button><svg><use href="#magS"/></svg></button><button><svg><use href="#magF"/></svg></button><button><svg><use href="#win"/></svg></button><button><svg><use href="#magW"/></svg></button><i></i>
        <button><svg><use href="#target"/></svg></button><i></i>
        <button><svg><use href="#sel"/></svg></button><button><svg><use href="#sel2"/></svg></button><button><svg><use href="#list"/></svg></button><i></i>
        <button><svg><use href="#mv1"/></svg></button><button><svg><use href="#mv2"/></svg></button><button><svg><use href="#ang1"/></svg></button><button><svg><use href="#ang2"/></svg></button><i></i>
        <button><svg><use href="#ln1"/></svg></button><button><svg><use href="#ln2"/></svg></button><button><svg viewBox="0 0 24 24"><path d="M5 10l9 9M4.500 13V9.500H8M14.500 15v4H11M9.500 10l-3 3M13.500 14l-3 3" stroke-width="1.200"/><text x="12" y="12" font-size="10" font-weight="600" fill="#222" stroke="none">3</text></svg></button><button><svg><use href="#dim"/></svg></button><i></i>
        <button><svg><use href="#ruler"/></svg></button><button><svg><use href="#copy"/></svg></button><button><svg><use href="#film"/></svg></button><button><svg viewBox="0 0 24 24"><circle cx="9.500" cy="9.500" r="5" fill="#b9d6ec" stroke="#7c97ad" stroke-dasharray="2 1"/><circle cx="15" cy="14.500" r="5" fill="#f6c478"/><text x="15" y="18" text-anchor="middle" font-size="9" font-weight="600" fill="#222" stroke="none">$</text></svg></button><button><svg><use href="#cross"/></svg></button>
      </div>
    </div>
    <div class="view three">
      <div class="bar">
        <button><svg><use href="#hand"/></svg></button><i></i>
        <button><svg><use href="#mag"/></svg></button><button><svg><use href="#magG"/></svg></button><button><svg><use href="#magF"/></svg></button><i></i>
        <button><svg><use href="#orbit"/></svg></button><button><svg><use href="#box"/></svg></button><button><svg><use href="#box2"/></svg></button><i></i>
        <button><svg><use href="#sel"/></svg></button><button><svg><use href="#list"/></svg></button><i></i>
        <button><svg><use href="#mv2"/></svg></button><i></i>
        <button><svg><use href="#ruler"/></svg></button><button><svg><use href="#copy"/></svg></button><button><svg><use href="#cross"/></svg></button><i></i>
        <button><svg><use href="#snap"/></svg></button><button class="arrow"><svg><use href="#chev"/></svg></button><i></i>
        <button><svg><use href="#target"/></svg></button>
      </div>
    </div>
  </main>
  <svg class="pointer" viewBox="0 0 12 18"><path d="M.5.500v16l4-4 2.500 5 2-1-2-4.500h4.500z" fill="#fff" stroke="#222"/></svg>
</div>
</body>
</html>
```
FILE: styles.css
```css
* { box-sizing: border-box; }
body { margin: 0; font: 11px/16px "Noto Sans", "Open Sans", sans-serif; color: #000; background: #fff; }
h1, h2, h3 { margin: 0; font-weight: 400; }
button { margin: 0; padding: 0; border: 0; background: none; font: inherit; color: inherit; }
svg { display: block; flex: none; width: 24px; height: 24px; fill: none; stroke: #222; }
.sprite { position: absolute; width: 0; height: 0; }

.app { display: flex; height: 100vh; overflow: hidden; position: relative; }
.side { display: flex; flex-direction: column; flex: none; width: 363px; background: #f7f6f5; border-right: 1px solid #b0b0b0; }
.topbar { display: flex; flex: none; align-items: center; height: 26px; padding: 0 0 4px 1px; border-bottom: 1px solid #b0b0b0; }
.side-body { display: flex; flex: 1; min-height: 0; }

.drop { position: relative; display: block; height: 24px; }
.drop select { appearance: none; display: block; width: 100%; height: 100%; padding: 0 20px 0 3px; border: 1px solid #aeaeae; border-radius: 3px; background: #fff; font: inherit; color: #000; }
.drop svg { position: absolute; right: 5px; top: 7px; width: 10px; height: 10px; pointer-events: none; }
.tabs-drop { width: 191px; margin-right: 4px; }
.letter { width: 28px; height: 20px; }
.ico { display: grid; place-items: center; flex: none; width: 28px; height: 24px; }
.collapse { display: grid; place-items: center; flex: 1; height: 20px; }
.collapse svg { width: 10px; height: 10px; }

.panel { display: flex; flex-direction: column; flex: none; width: 309px; }
.title { display: flex; flex: none; align-items: center; height: 49px; padding: 8px 11px 0 12px; background: #fff; border-bottom: 1px solid #b0b0b0; }
.title h1 { flex: 1; margin-left: 8px; font-size: 13px; }
.scroll { position: relative; flex: 1; min-height: 0; overflow: hidden; padding: 0 15px 0 10px; }
.thumb { position: absolute; right: 3px; top: 11px; bottom: 0; width: 2px; background: #979797; }
section { padding: 0 0 16px 2px; border-top: 1px solid #b0b0b0; }
.thumb + section { border-top-color: transparent; }
.head { display: flex; align-items: center; height: 30px; margin: 0 -2px 1px 0; }
.head .c { width: 10px; height: 10px; margin: 0 7px 0 1px; }
.head h2 { flex: 1; font-size: 12px; font-weight: 600; }
.form { display: grid; grid-template-columns: 71px 177px 1fr; row-gap: 4px; align-items: center; color: #555; }
.form .ico { margin-left: 6px; }
h3 { height: 24px; font-size: 11px; line-height: 24px; }
.grid + h3 { margin-top: 12px; }
.grid { display: flex; flex-wrap: wrap; gap: 8px; margin-right: -10px; }
.card, .tile { position: relative; display: flex; flex-direction: column; align-items: center; background: #fff; border: 1px solid #e6e6e6; border-radius: 4px; }
.card { width: 64px; height: 64px; padding-top: 6px; gap: 6px; }
.tile { width: 40px; height: 40px; padding-top: 7px; }
.more { position: absolute; right: 1px; bottom: 1px; width: 7px; height: 7px; }

.strip { flex: 1; min-width: 0; overflow: hidden; border-left: 1px solid #b0b0b0; }
.group { --h: 34px; }
.group.first { height: 37px; margin: 0 1px; border-bottom: 1px solid #f7f6f5; box-shadow: inset 0 -1px #b0b0b0; }
.group.short { --h: 31px; padding-top: 1px; }
.group.mid { --h: 33px; }
.group.line { box-shadow: inset 0 1px #dedede; }
.strip button { position: relative; display: grid; place-items: center; width: 100%; height: var(--h); }
.strip .on { background: #cadeee; }
.dot::after { content: ""; position: absolute; right: 3px; top: 16px; width: 3px; height: 3px; border-radius: 50%; background: #888; }
.first .dot::after { right: 2px; }

.work { display: flex; flex-direction: column; flex: 1; min-width: 0; }
.view { padding-left: 4px; }
.plan { flex: 1; padding-top: 1px; }
.three { flex: none; height: 69px; padding-top: 5px; border-top: 1px solid #b0b0b0; }
.bar { display: inline-flex; height: 32px; padding-right: 1px; border: 1px solid #b5b5b5; border-radius: 3px; background: #f7f6f5; }
.bar button { flex: none; width: 29px; padding: 3px 2px 3px 3px; }
.bar i { flex: none; width: 6px; margin: 5px 0; background: linear-gradient(#b0b0b0, #b0b0b0) 3px 0 / 1px 100% no-repeat; }
.bar .arrow { width: 12px; padding: 10px 2px 10px 0; }
.arrow svg { width: 10px; height: 10px; }
.pointer { position: absolute; left: 912px; top: 733px; width: 12px; height: 18px; }
```
